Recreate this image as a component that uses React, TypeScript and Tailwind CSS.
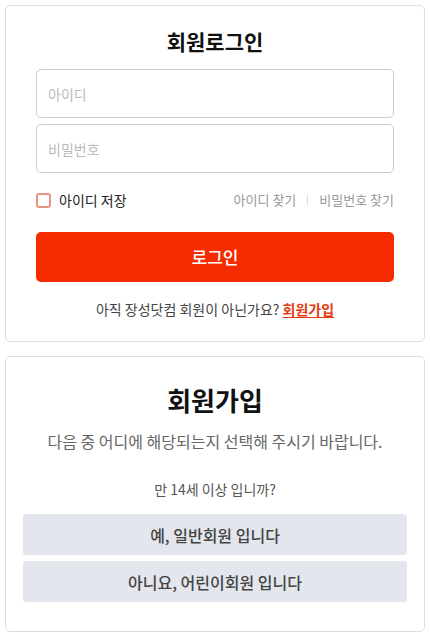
import React from "react";

export default function App() {
  return (
    <div
      className="w-[430px] h-[637px] bg-white px-[5px] pt-[5px] flex flex-col gap-[14px]"
      style={{ fontFamily: '"Noto Sans CJK KR", "Noto Sans", sans-serif', fontFeatureSettings: '"palt"' }}
    >
      <div className="h-[337px] border border-[#dddddd] rounded-[5px] px-[30px] pt-[21px] flex flex-col">
        <h1 className="text-[21px] leading-[28px] font-bold text-[#111] text-center">회원로그인</h1>
        <div className="mt-[14px] flex flex-col gap-[6px]">
          <input
            placeholder="아이디"
            className="h-[49px] w-full border border-[#cccccc] rounded-[5px] px-[11px] text-[14px] placeholder:text-[#bbbbbb] outline-none"
          />
          <input
            type="password"
            placeholder="비밀번호"
            className="h-[49px] w-full border border-[#cccccc] rounded-[5px] px-[11px] text-[14px] placeholder:text-[#bbbbbb] outline-none"
          />
        </div>
        <div className="mt-[19px] h-[16px] flex items-center justify-between">
          <label className="flex items-center gap-[8px]">
            <span className="w-[15px] h-[15px] border-2 border-[#e99483] rounded-[3px] bg-white" />
            <span className="text-[14px] text-[#222]">아이디 저장</span>
          </label>
          <div className="flex items-center text-[13px] text-[#999999]">
            <span>아이디 찾기</span>
            <span className="mx-[11px] w-px h-[10px] bg-[#dddddd]" />
            <span>비밀번호 찾기</span>
          </div>
        </div>
        <button className="mt-[24px] h-[50px] w-full bg-[#f62c00] rounded-[5px] text-white text-[17px] font-medium">
          로그인
        </button>
        <p className="mt-[16px] text-[14px] leading-[22px] text-[#444] text-center">
          아직 장성닷컴 회원이 아닌가요?{" "}
          <a className="font-bold text-[#e53a12] underline underline-offset-2">회원가입</a>
        </p>
      </div>

      <div className="h-[276px] border border-[#dddddd] rounded-[5px] px-[17px] pt-[24px] flex flex-col">
        <h2 className="text-[26px] leading-[38px] font-bold text-[#111] text-center">회원가입</h2>
        <p className="mt-[11px] text-[16px] leading-[22px] text-[#666] text-center">
          다음 중 어디에 해당되는지 선택해 주시기 바랍니다.
        </p>
        <p className="mt-[27px] text-[14px] leading-[20px] text-[#555] text-center">만 14세 이상 입니까?</p>
        <div className="mt-[15px] flex flex-col gap-[6px]">
          <button className="h-[41px] w-full bg-[#e4e6ed] rounded-[3px] text-[16px] font-medium text-[#444]">
            예, 일반회원 입니다
          </button>
          <button className="h-[41px] w-full bg-[#e4e6ed] rounded-[3px] text-[16px] font-medium text-[#444]">
            아니요, 어린이회원 입니다
          </button>
        </div>
      </div>
    </div>
  );
}
